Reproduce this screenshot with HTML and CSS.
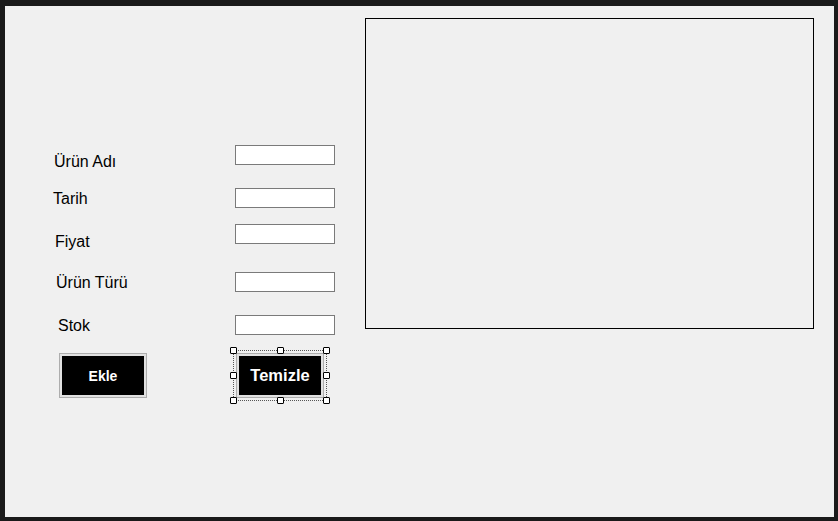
FILE: index.html
```html
<!DOCTYPE html>
<html lang="tr">
<head>
    <meta charset="UTF-8">
    <meta name="viewport" content="width=device-width, initial-scale=1.0">
    <title>Form1</title>
    <link rel="stylesheet" href="styles.css">
</head>
<body>
    <div class="frame">
        <div class="form">
            <div class="row">
                <label class="lbl lbl-ad" for="ad">Ürün Adı</label>
                <input type="text" id="ad">
            </div>
            <div class="row row-tarih">
                <label class="lbl lbl-tarih" for="tarih">Tarih</label>
                <input type="text" id="tarih">
            </div>
            <div class="row row-fiyat">
                <label class="lbl lbl-fiyat" for="fiyat">Fiyat</label>
                <input type="text" id="fiyat">
            </div>
            <div class="row row-tur">
                <label class="lbl lbl-tur" for="tur">Ürün Türü</label>
                <input type="text" id="tur">
            </div>
            <div class="row row-stok">
                <label class="lbl lbl-stok" for="stok">Stok</label>
                <input type="text" id="stok">
            </div>

            <div class="buttons">
                <button class="btn btn-ekle">Ekle</button>
                <div class="selected">
                    <button class="btn btn-temizle">Temizle</button>
                    <div class="selection">
                        <span class="handle tl"></span>
                        <span class="handle tm"></span>
                        <span class="handle tr"></span>
                        <span class="handle ml"></span>
                        <span class="handle mr"></span>
                        <span class="handle bl"></span>
                        <span class="handle bm"></span>
                        <span class="handle br"></span>
                    </div>
                </div>
            </div>
        </div>

        <div class="list-box"></div>
    </div>
</body>
</html>
```

FILE: styles.css
```css
body { margin: 0; padding: 0; background: #1a1a1a; height: 521px; overflow: hidden; font-family: "Liberation Sans", Arial, sans-serif; }
.frame { margin: 6px 4px 4px 5px; height: 511px; background: #f0f0f0; display: flex; align-items: flex-start; }

.form { width: 360px; padding-top: 139px; }
.row { display: flex; align-items: flex-start; height: 20px; }
.row-tarih { margin-top: 23px; }
.row-fiyat { margin-top: 16px; }
.row-tur { margin-top: 28px; }
.row-stok { margin-top: 23px; }

.lbl { box-sizing: border-box; width: 230px; font-size: 16px; line-height: 18px; color: #000; }
.lbl-ad { padding-left: 49px; margin-top: 8px; }
.lbl-tarih { padding-left: 48px; margin-top: 2px; }
.lbl-fiyat { padding-left: 50px; margin-top: 9px; }
.lbl-tur { padding-left: 51px; margin-top: 2px; }
.lbl-stok { padding-left: 53px; margin-top: 2px; }

input { box-sizing: border-box; width: 100px; height: 20px; margin: 0; padding: 0 3px; border: 1px solid #7a7a7a; background: #fff; outline: none; }

.buttons { display: flex; margin-top: 18px; padding-left: 54px; gap: 89px; }
.btn { box-sizing: border-box; width: 88px; height: 45px; margin: 0; padding: 0; border: 1px solid #adadad; background: #000; box-shadow: inset 0 0 0 2px #e1e1e1; color: #fff; font-family: "Liberation Sans", Arial, sans-serif; font-weight: bold; display: block; }
.btn-ekle { font-size: 14px; }
.btn-temizle { font-size: 16.5px; }

.selected { position: relative; }
.selection { position: absolute; top: -3px; left: -3px; right: -3px; bottom: -3px; border: 1px dotted #555; }
.handle { position: absolute; box-sizing: border-box; width: 7px; height: 7px; background: #fff; border: 1px solid #000; border-radius: 1px; }
.tl, .tm, .tr { top: -4px; }
.bl, .bm, .br { bottom: -4px; }
.ml, .mr { top: calc(50% - 3.5px); }
.tl, .ml, .bl { left: -4px; }
.tr, .mr, .br { right: -4px; }
.tm, .bm { left: calc(50% - 3.5px); }

.list-box { box-sizing: border-box; width: 449px; height: 311px; margin-top: 12px; border: 1px solid #000; }
```
